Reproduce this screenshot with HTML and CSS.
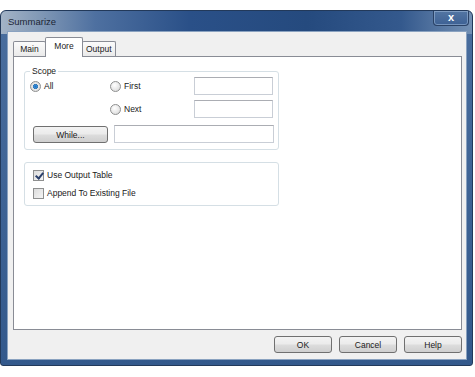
FILE: index.html
```html
<!DOCTYPE html>
<html lang="en">

<head>
	<meta charset="UTF-8">
	<meta name="viewport" content="width=device-width, initial-scale=1.0">
	<title>Summarize</title>

	<link rel="stylesheet" href="styles.css">
</head>

<body>

	<div class="window">
		<div class="titlebar">
			<span class="title">Summarize</span>
			<span class="close">x</span>
		</div>

		<div class="client">
			<ul class="tabs">
				<li class="tab">Main</li>
				<li class="tab active">More</li>
				<li class="tab">Output</li>
			</ul>

			<div class="panel">
				<!-- Scope 그룹 -->
				<div class="group scope">
					<span class="group-label">Scope</span>
					<div class="scope-grid">
						<label class="radio checked"><span class="radio-dot"></span>All</label>
						<label class="radio"><span class="radio-dot"></span>First</label>
						<span class="textbox"></span>

						<span></span>
						<label class="radio"><span class="radio-dot"></span>Next</label>
						<span class="textbox"></span>

						<button class="btn while-btn">While...</button>
						<span class="textbox wide"></span>
					</div>
				</div>

				<!-- 출력 옵션 -->
				<div class="group output">
					<label class="check checked"><span class="check-box"></span>Use Output Table</label>
					<label class="check"><span class="check-box"></span>Append To Existing File</label>
				</div>
			</div>

			<div class="footer">
				<button class="btn">OK</button>
				<button class="btn">Cancel</button>
				<button class="btn">Help</button>
			</div>
		</div>
	</div>

</body>

</html>
```

FILE: styles.css
```css
* {
	padding: 0;
	margin: 0;
	box-sizing: border-box;
}

ul {
	list-style: none;
}

body {
	background: #fff;
	font-family: "Liberation Sans", Arial, sans-serif;
	font-size: 8.5px;
	color: #1a1a1a;
}

/* 창 틀 */

.window {
	margin-top: 10px;
	width: 473px;
	height: 356px;
	padding: 0 6px 6px 7px;
	display: flex;
	flex-direction: column;
	border: 1px solid #22395a;
	border-radius: 6px 6px 3px 3px;
	background:
		linear-gradient(90deg, #a3b3c6 0%, #8299b6 8%, #4e70a0 20%, #2a5088 40%, #254a7e 65%, #34598d 85%, #7390b4 100%) top / 100% 23px no-repeat,
		linear-gradient(180deg, #4a6e9e 0%, #33598c 100%);
}

.titlebar {
	height: 22px;
	display: flex;
	justify-content: space-between;
	align-items: flex-start;
}

.title {
	font-size: 9.5px;
	line-height: 21px;
	color: #1c2634;
}

.close {
	width: 36px;
	height: 15px;
	margin-right: -3px;
	border: 1px solid #2a4266;
	border-top: none;
	border-radius: 0 0 4px 4px;
	box-shadow: inset 0 0 0 1px rgba(170, 195, 225, 0.5);
	background: linear-gradient(180deg, #5376a3 0%, #3d6194 100%);
	color: #fff;
	font-weight: bold;
	font-size: 11px;
	line-height: 13px;
	text-align: center;
}

.client {
	flex: 1;
	background: #f0f0f0;
	padding: 5px 4px 6px 5px;
	display: flex;
	flex-direction: column;
	box-shadow: 0 0 0 1px #8aa2c0;
}

/* 탭 */

.tabs {
	display: flex;
	align-items: flex-end;
	height: 19px;
}

.tab {
	height: 15px;
	min-width: 33px;
	padding: 0 3px;
	text-align: center;
	line-height: 14px;
	border: 1px solid #898c95;
	border-bottom: none;
	border-radius: 2px 2px 0 0;
	background: linear-gradient(180deg, #fbfbfb 0%, #eaeaea 100%);
}

.tab.active {
	height: 20px;
	min-width: 38px;
	line-height: 16px;
	background: #fff;
	margin: 0 -1px -1px;
	position: relative;
	z-index: 1;
}

.panel {
	height: 274px;
	background: #fff;
	border: 1px solid #898c95;
	padding: 14px 0 0 10px;
}

/* 그룹 박스 */

.group {
	width: 255px;
	border: 1px solid #d5dfe5;
	border-radius: 3px;
	position: relative;
}

.group-label {
	position: absolute;
	left: 5px;
	top: -6px;
	padding: 0 2px;
	background: #fff;
	line-height: 10px;
}

.scope {
	padding: 5px 0 6px 5px;
}

.scope-grid {
	display: grid;
	grid-template-columns: 80px 84px 79px;
	grid-template-rows: 18px 23px 25px;
	align-items: end;
}

.textbox {
	height: 18px;
	border: 1px solid #c9ced6;
	border-top-color: #abadb3;
	background: #fff;
}

.textbox.wide {
	grid-column: 2 / 4;
	margin-left: 4px;
	margin-right: -1px;
}

.radio,
.check {
	display: flex;
	align-items: center;
	height: 18px;
}

.radio-dot {
	width: 11px;
	height: 11px;
	border-radius: 50%;
	border: 1px solid #8e8f8f;
	background: radial-gradient(circle at 40% 35%, #ffffff 0%, #e6e6e6 60%, #cfcfcf 100%);
	margin-right: 3px;
}

.radio.checked .radio-dot {
	background: radial-gradient(circle, #1f6fc0 0%, #3a8ed8 28%, #2f6fa8 38%, #e9e9e9 45%, #cfcfcf 100%);
}

/* 버튼 */

.btn {
	height: 17px;
	border: 1px solid #707070;
	border-radius: 3px;
	background: linear-gradient(180deg, #f3f3f3 0%, #ebebeb 48%, #dddddd 52%, #cfcfcf 100%);
	font-family: inherit;
	font-size: 8.5px;
	color: #1a1a1a;
}

.while-btn {
	width: 75px;
	margin-left: 3px;
}

.output {
	margin-top: 12px;
	padding: 5px 0 5px 8px;
	display: flex;
	flex-direction: column;
	gap: 4px;
}

.check {
	height: 14px;
}

.check-box {
	width: 11px;
	height: 11px;
	border: 1px solid #8e8f8f;
	background: linear-gradient(135deg, #dcdcdc 0%, #f5f5f5 100%);
	margin-right: 3px;
	position: relative;
}

.check.checked .check-box::after {
	content: "";
	position: absolute;
	left: 3px;
	top: 0;
	width: 3px;
	height: 6px;
	border: solid #2a3f6b;
	border-width: 0 2px 2px 0;
	transform: rotate(40deg);
}

.footer {
	margin-top: 6px;
	display: flex;
	justify-content: flex-end;
	gap: 7px;
}

.footer .btn {
	width: 58px;
}
```
